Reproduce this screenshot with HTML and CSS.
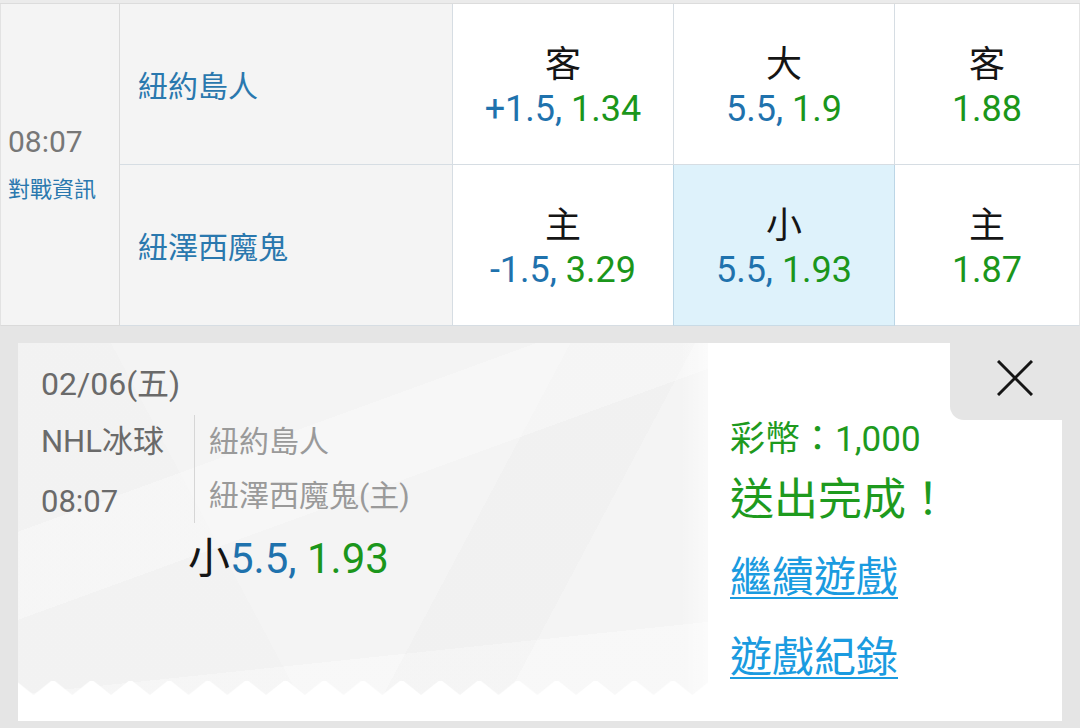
FILE: index.html
```html
<!DOCTYPE html>
<html lang="zh-Hant">
<head>
<meta charset="utf-8">
<title>投注完成</title>
<link rel="stylesheet" href="styles.css">
</head>
<body>
<div class="top-strip"></div>
<div class="odds">
  <div class="time-cell">
    <div class="t">08:07</div>
    <div class="info">對戰資訊</div>
  </div>
  <div class="team">紐約島人</div>
  <div class="odd"><span class="lbl">客</span><span class="val"><span class="b">+1.5,</span> <span class="g">1.34</span></span></div>
  <div class="odd"><span class="lbl">大</span><span class="val"><span class="b">5.5,</span> <span class="g">1.9</span></span></div>
  <div class="odd last"><span class="lbl">客</span><span class="val"><span class="g">1.88</span></span></div>
  <div class="team">紐澤西魔鬼</div>
  <div class="odd pre-sel"><span class="lbl">主</span><span class="val"><span class="b">-1.5,</span> <span class="g">3.29</span></span></div>
  <div class="odd sel"><span class="lbl">小</span><span class="val"><span class="b">5.5,</span> <span class="g">1.93</span></span></div>
  <div class="odd last"><span class="lbl">主</span><span class="val"><span class="g">1.87</span></span></div>
</div>
<div class="overlay">
  <div class="popup">
    <div class="ticket">
      <div class="ticket-body">
        <div class="date">02/06(五)</div>
        <div class="match">
          <div class="meta"><div>NHL冰球</div><div>08:07</div></div>
          <div class="teams"><div>紐約島人</div><div>紐澤西魔鬼(主)</div></div>
        </div>
        <div class="pick">小<span class="b">5.5,</span> <span class="g">1.93</span></div>
      </div>
      <svg class="zigzag" width="690" height="15" viewBox="0 0 690 15" aria-hidden="true">
        <defs>
          <pattern id="zz" x="15.6" y="0" width="38.75" height="15" patternUnits="userSpaceOnUse">
            <polygon points="0,15 17.5,1 21.25,1 38.75,15" fill="#ffffff"/>
          </pattern>
        </defs>
        <rect x="0" y="0" width="690" height="15" fill="url(#zz)"/>
      </svg>
      <div class="ticket-foot"></div>
    </div>
    <div class="result">
      <div class="result-head">
        <button class="close" type="button" aria-label="關閉">
          <svg width="36" height="36" viewBox="0 0 36 36"><path d="M1 1 L35 35 M35 1 L1 35" stroke="#151515" stroke-width="3" fill="none"/></svg>
        </button>
      </div>
      <div class="result-body">
        <div class="coins">彩幣：1,000</div>
        <div class="done">送出完成！</div>
        <a class="link" href="#">繼續遊戲</a>
        <a class="link second" href="#">遊戲紀錄</a>
      </div>
    </div>
  </div>
</div>
</body>
</html>
```

FILE: styles.css
```css
* { box-sizing: border-box; }

body {
  margin: 0;
  width: 1080px;
  height: 728px;
  overflow: hidden;
  background: #e5e5e5;
  font-family: Roboto, "Noto Sans CJK TC", sans-serif;
}

.top-strip {
  height: 4px;
  background: #ebebeb;
  border-bottom: 1px solid #dcdcdc;
}

.odds {
  display: grid;
  grid-template-columns: 120px 333px 221px 221px 185px;
  grid-template-rows: 161px 161px;
  background: #fff;
}

.time-cell {
  grid-row: span 2;
  background: #f4f4f4;
  border-right: 1px solid #dadada;
  border-bottom: 1px solid #dadada;
  border-left: 1px solid #e2e2e2;
  display: flex;
  flex-direction: column;
  justify-content: center;
  padding: 4px 0 0 7px;
}

.time-cell .t {
  font-size: 30px;
  line-height: 36px;
  color: #777;
}

.time-cell .info {
  font-size: 22px;
  line-height: 40px;
  margin-top: 10px;
  color: #2a78ae;
}

.team {
  background: #f4f4f4;
  border-right: 1px solid #d6dde3;
  border-bottom: 1px solid #d6dde3;
  display: flex;
  align-items: center;
  padding: 5px 0 0 18px;
  font-size: 30px;
  line-height: 36px;
  color: #2a78ae;
}

.odd {
  border-right: 1px solid #d6dde3;
  border-bottom: 1px solid #d6dde3;
  display: flex;
  flex-direction: column;
  align-items: center;
  justify-content: center;
  padding-top: 6px;
  font-size: 36px;
  line-height: 44px;
}

.odd.last { border-right-color: #e4e4e4; }
.odd.pre-sel { border-right-color: #bcd6e6; }
.odd.sel {
  background: #def2fb;
  border-right-color: #bcd6e6;
  border-bottom-color: #c9dbe6;
}

.lbl { color: #151515; }
.b { color: #1f72ad; }
.g { color: #1b961b; }

.overlay {
  padding: 17px 18px 7px;
}

.popup {
  display: flex;
  height: 378px;
}

.ticket {
  width: 690px;
  display: flex;
  flex-direction: column;
  background:
    linear-gradient(160deg, rgba(255,255,255,0) 0 30%, rgba(255,255,255,0.3) 30% 44%, rgba(255,255,255,0) 44%),
    linear-gradient(62deg, rgba(0,0,0,0.008) 0 33%, rgba(0,0,0,0) 33%),
    linear-gradient(118deg, rgba(0,0,0,0) 0 62%, rgba(0,0,0,0.01) 62% 76%, rgba(0,0,0,0) 76%),
    linear-gradient(-6deg, rgba(255,255,255,0.35) 0 22%, rgba(255,255,255,0) 22%),
    linear-gradient(90deg, rgba(255,255,255,0) 0 96%, rgba(255,255,255,0.5) 100%),
    #f4f4f4;
}

.ticket-body {
  flex: 1;
  padding: 21px 0 0 23px;
}

.date {
  font-size: 32px;
  line-height: 40px;
  color: #6a6a6a;
}

.match {
  display: flex;
  align-items: flex-start;
  margin-top: 8px;
}

.meta {
  width: 153px;
  font-size: 31px;
  line-height: 60px;
  color: #6a6a6a;
}

.teams {
  margin-top: 3px;
  border-left: 1px solid #d6d6d6;
  padding-left: 14px;
  font-size: 30px;
  line-height: 54px;
  color: #9a9a9a;
}

.pick {
  margin: 2px 0 0 147px;
  font-size: 42px;
  line-height: 50px;
  color: #151515;
}

.zigzag {
  display: block;
  flex: none;
}

.ticket-foot {
  height: 26px;
  background: #fff;
  flex: none;
}

.result {
  width: 354px;
  background: #fff;
  display: flex;
  flex-direction: column;
}

.result-head {
  display: flex;
  justify-content: flex-end;
}

.close {
  width: 112px;
  height: 77px;
  margin: 0;
  border: 0;
  background: #e5e5e5;
  border-bottom-left-radius: 14px;
  padding: 17px 29px 0 0;
  display: flex;
  justify-content: flex-end;
  align-items: flex-start;
}

.close svg { display: block; }

.result-body {
  padding-left: 22px;
}

.coins {
  font-size: 35px;
  line-height: 40px;
  color: #1e9a1e;
}

.done {
  font-size: 44px;
  line-height: 56px;
  margin-top: 12px;
  color: #1e9a1e;
}

.link {
  display: block;
  width: max-content;
  font-size: 42px;
  line-height: 56px;
  margin-top: 22px;
  color: #1a9be0;
  text-decoration: underline;
  text-decoration-thickness: 2px;
  text-underline-offset: 5px;
}

.link.second { margin-top: 24px; }
```
